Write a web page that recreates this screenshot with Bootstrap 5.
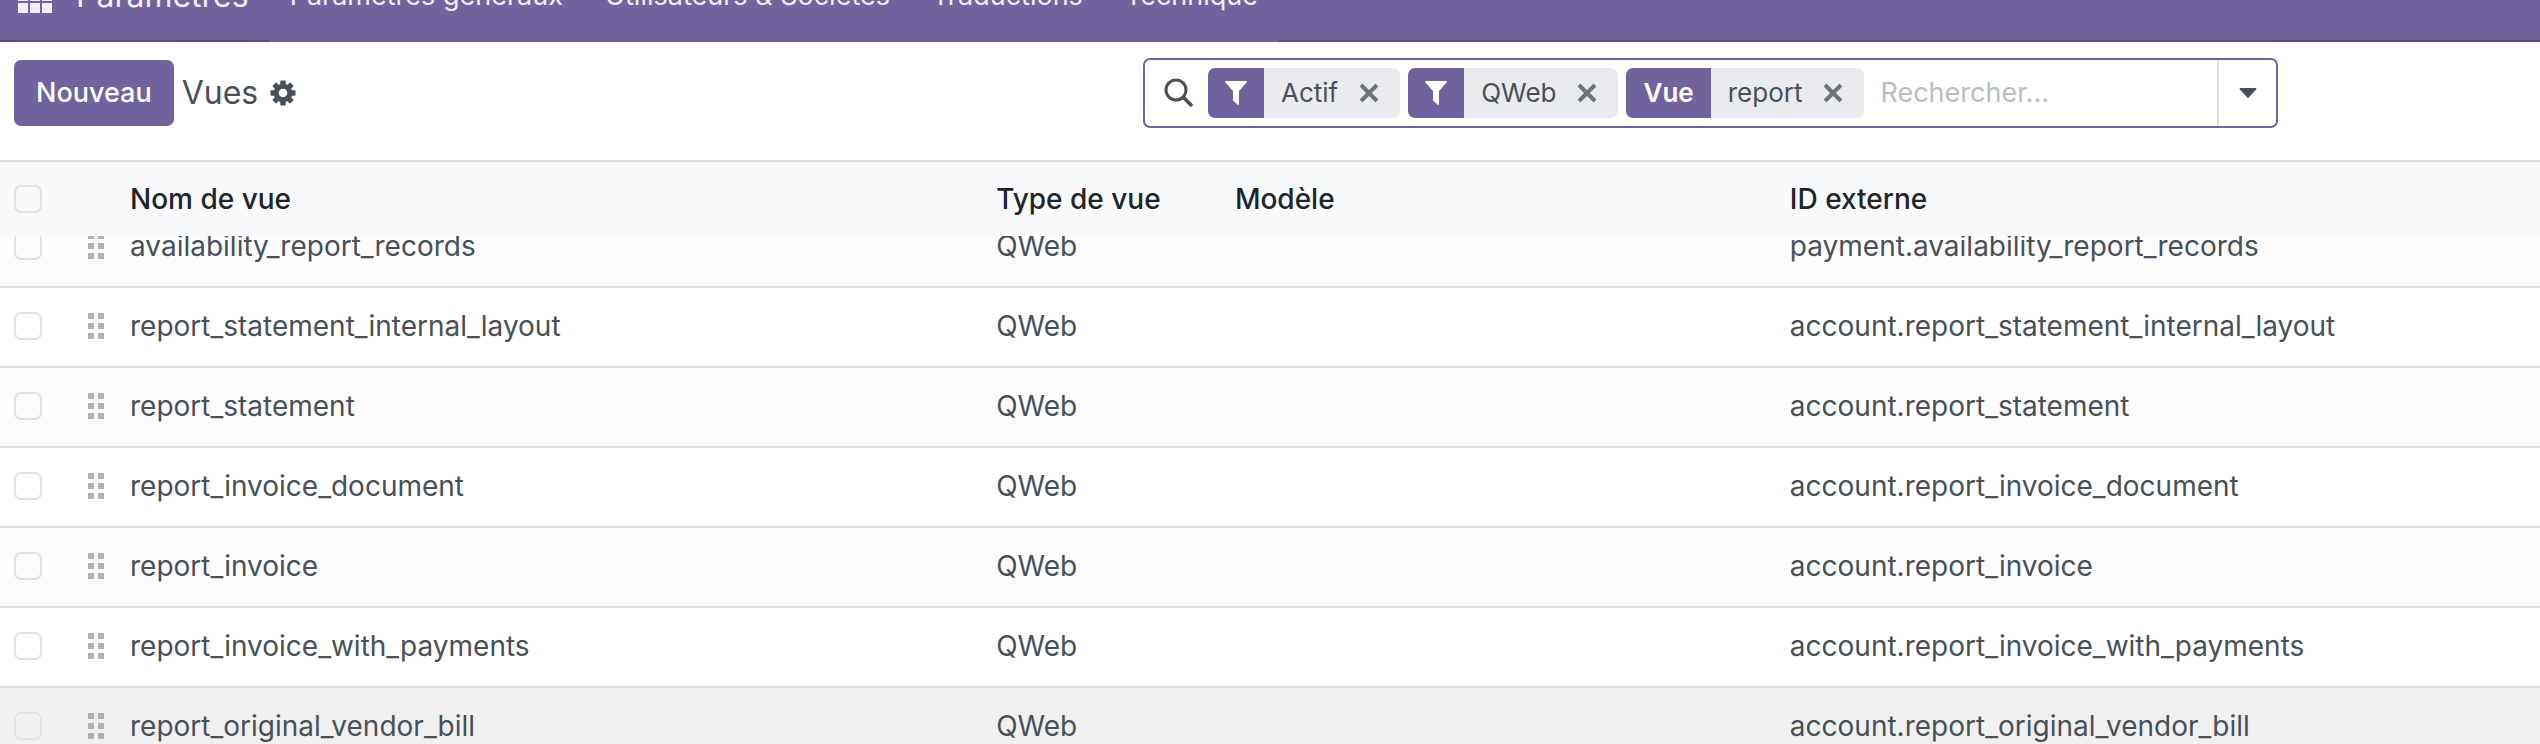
<!DOCTYPE html>
<html lang="fr">
<head>
<meta charset="utf-8">
<meta name="viewport" content="width=device-width, initial-scale=1">
<title>Vues</title>
<link href="https://cdn.jsdelivr.net/npm/bootstrap@5.3.0/dist/css/bootstrap.min.css" rel="stylesheet">
<style>
  :root { --brand: #71639e; --brand-dark: #5a4f7f; --line: #dee0e3; --ink: #495057; }
  body { font-family: Inter, "Liberation Sans", sans-serif; font-size: 27px; line-height: 36px; color: var(--ink); }
  /* top bar, scrolled partly out of view */
  .topbar { height: 42px; background: var(--brand); box-shadow: inset 0 -2px var(--brand-dark); }
  .topbar-inner { height: 92px; }
  .topbar a { color: #f1eef8; text-decoration: none; }
  .apps-link { padding: 0 24px 0 18px; }
  .app-name { font-size: 32px; padding-right: 20px; }
  .menu { background: var(--brand); }
  .menu a { padding: 0 21px; }
  .panel { height: 118px; padding-bottom: 16px; }
  .panel-left { flex: 0 0 45%; padding-left: 14px; gap: 8px; }
  .btn-new { background: var(--brand); color: #fff; font-size: 27px; line-height: 36px; font-weight: 500; padding: 15px 22px; border: 0; border-radius: 7px; }
  .btn-new:hover { background: var(--brand-dark); color: #fff; }
  .crumb { font-size: 32px; line-height: 40px; font-weight: 400; padding-right: 4px; }
  .plain-btn { background: none; border: 0; padding: 0; color: inherit; }
  .search { flex: 0 0 44.7%; min-width: 0; height: 70px; border: 2px solid var(--brand); border-radius: 7px; padding-left: 19px; }
  .search-icon { margin-right: 14px; }
  .facet { height: 50px; background: #e9ebee; border-radius: 7px; margin-right: 8px; overflow: hidden; font-size: 26px; }
  .facet-tag { background: var(--brand); color: #fff; font-weight: 600; padding: 0 17px; }
  .facet-icon { width: 56px; padding: 0; }
  .facet-text { padding-left: 17px; }
  .facet .plain-btn { padding: 0 21px; color: #6c757d; }
  .search input { width: 0; border: 0; outline: 0; background: none; min-width: 0; padding: 0 0 0 8px; color: var(--ink); font-size: 27px; }
  .search input::placeholder { color: #b9bec4; opacity: 1; }
  .search-toggle { width: 59px; border-left: 2px solid var(--line); }
  .list { min-height: 0; }
  .view-table { table-layout: fixed; border-collapse: separate; border-spacing: 0; width: 100%; }
  .view-table th { height: 76px; background: #f8f9fb; border-top: 2px solid var(--line); color: #212529; font-weight: 500; font-size: 28px; position: sticky; top: 0; z-index: 1; padding: 0 9px; }
  .view-table td { height: 80px; border-bottom: 2px solid var(--line); padding: 0 9px 2px; white-space: nowrap; font-size: 28px; }
  .view-table tbody tr:nth-child(odd) { background: #fcfcfd; }
  .view-table tbody tr.hovered { background: #f0f0f1; }
  .view-table .pick { padding-left: 14px; }
  .pick .form-check-input { display: block; float: none; width: 28px; height: 28px; margin: 0; border: 2px solid #e0e2e4; border-radius: 7px; background-color: transparent; }
  .c-pick { width: 60px; } .c-grip { width: 61px; } .c-name { width: 34.1%; } .c-type { width: 9.4%; } .c-model { width: 21.85%; }
  .view-table .grip { padding-left: 28px; }
  svg { display: block; }
</style>
</head>
<body class="vh-100 d-flex flex-column overflow-hidden bg-white">

<svg class="d-none" aria-hidden="true">
  <symbol id="i-funnel" viewBox="0 0 22 24"><path d="M1 0h20c1 0 1 1 .5 1.600L14 10v13c0 1-1 1.200-1.600.600L8.500 20c-.4-.4-.5-.7-.5-1.200V10L.5 1.600C0 1 0 0 1 0z" fill="currentColor"/></symbol>
  <symbol id="i-cross" viewBox="0 0 20 20"><path d="M2 2l16 16M18 2L2 18" stroke="currentColor" stroke-width="4" fill="none"/></symbol>
  <symbol id="i-grip" viewBox="0 0 16 26"><path d="M0 0h6v6H0zM10 0h6v6h-6zM0 10h6v6H0zM10 10h6v6h-6zM0 20h6v6H0zM10 20h6v6h-6z" fill="#adb2b7"/></symbol>
</svg>

<header class="topbar flex-shrink-0 d-flex align-items-end overflow-hidden">
  <nav class="topbar-inner flex-shrink-0 d-flex">
    <a class="apps-link d-flex align-items-center" href="#" aria-label="Applications">
      <svg width="34" height="34" viewBox="0 0 34 34" fill="#f1eef8"><path d="M0 0h10v10H0zM12 0h10v10H12zM24 0h10v10H24zM0 12h10v10H0zM12 12h10v10H12zM24 12h10v10H24zM0 24h10v10H0zM12 24h10v10H12zM24 24h10v10H24z"/></svg>
    </a>
    <a class="app-name d-flex align-items-center" href="#">Paramètres</a>
    <div class="menu d-flex align-items-center">
      <a href="#">Paramètres généraux</a>
      <a href="#">Utilisateurs &amp; Sociétés</a>
      <a href="#">Traductions</a>
      <a href="#">Technique</a>
    </div>
  </nav>
</header>

<section class="panel flex-shrink-0 d-flex align-items-center">
  <div class="panel-left d-flex align-items-center">
    <button type="button" class="btn btn-new">Nouveau</button>
    <h1 class="crumb m-0">Vues</h1>
    <button type="button" class="plain-btn" aria-label="Actions">
      <svg width="26" height="26" viewBox="-13 -13 26 26"><g fill="currentColor"><g id="teeth"><rect x="-2.700" y="-12.500" width="5.400" height="25" rx="1"/><rect x="-12.500" y="-2.700" width="25" height="5.400" rx="1"/></g><use href="#teeth" transform="rotate(45)"/><circle r="9.300"/></g><circle r="4.300" fill="#fff"/></svg>
    </button>
  </div>
  <div class="search d-flex align-items-center" role="search">
    <svg class="search-icon flex-shrink-0" width="30" height="30" viewBox="0 0 30 30" fill="none" stroke="currentColor" stroke-width="3"><circle cx="12" cy="12" r="10"/><path d="M19 19l9 9" stroke-width="3.500"/></svg>
    <div class="facet flex-shrink-0 d-flex align-items-stretch">
      <span class="facet-tag facet-icon d-flex align-items-center justify-content-center"><svg width="22" height="24"><use href="#i-funnel"/></svg></span>
      <span class="facet-text d-flex align-items-center">Actif</span>
      <button type="button" class="plain-btn" aria-label="Retirer Actif"><svg width="20" height="20"><use href="#i-cross"/></svg></button>
    </div>
    <div class="facet flex-shrink-0 d-flex align-items-stretch">
      <span class="facet-tag facet-icon d-flex align-items-center justify-content-center"><svg width="22" height="24"><use href="#i-funnel"/></svg></span>
      <span class="facet-text d-flex align-items-center">QWeb</span>
      <button type="button" class="plain-btn" aria-label="Retirer QWeb"><svg width="20" height="20"><use href="#i-cross"/></svg></button>
    </div>
    <div class="facet flex-shrink-0 d-flex align-items-stretch">
      <span class="facet-tag d-flex align-items-center">Vue</span>
      <span class="facet-text d-flex align-items-center">report</span>
      <button type="button" class="plain-btn" aria-label="Retirer report"><svg width="20" height="20"><use href="#i-cross"/></svg></button>
    </div>
    <input class="flex-grow-1" type="text" placeholder="Rechercher..." aria-label="Rechercher">
    <button type="button" class="plain-btn search-toggle align-self-stretch d-flex align-items-center justify-content-center flex-shrink-0" aria-label="Options de recherche">
      <svg width="18" height="10" viewBox="0 0 18 10"><path d="M1.500 0h15q1.500 0 .7 1.200L10 9.300q-1 1-2 0L.8 1.200Q0 0 1.500 0z" fill="currentColor"/></svg>
    </button>
  </div>
</section>

<main class="list flex-grow-1 overflow-hidden" id="list">
  <table class="view-table">
    <colgroup><col class="c-pick"><col class="c-grip"><col class="c-name"><col class="c-type"><col class="c-model"><col></colgroup>
    <thead>
      <tr><th class="pick"><input class="form-check-input" type="checkbox" aria-label="Tout sélectionner"></th><th></th><th>Nom de vue</th><th>Type de vue</th><th>Modèle</th><th>ID externe</th></tr>
    </thead>
    <tbody>
      <tr><td class="pick"><input class="form-check-input" type="checkbox" aria-label="Sélectionner"></td><td class="grip"><svg width="16" height="26"><use href="#i-grip"/></svg></td><td>availability_report_records</td><td>QWeb</td><td></td><td>payment.availability_report_records</td></tr>
      <tr><td class="pick"><input class="form-check-input" type="checkbox" aria-label="Sélectionner"></td><td class="grip"><svg width="16" height="26"><use href="#i-grip"/></svg></td><td>report_statement_internal_layout</td><td>QWeb</td><td></td><td>account.report_statement_internal_layout</td></tr>
      <tr><td class="pick"><input class="form-check-input" type="checkbox" aria-label="Sélectionner"></td><td class="grip"><svg width="16" height="26"><use href="#i-grip"/></svg></td><td>report_statement</td><td>QWeb</td><td></td><td>account.report_statement</td></tr>
      <tr><td class="pick"><input class="form-check-input" type="checkbox" aria-label="Sélectionner"></td><td class="grip"><svg width="16" height="26"><use href="#i-grip"/></svg></td><td>report_invoice_document</td><td>QWeb</td><td></td><td>account.report_invoice_document</td></tr>
      <tr><td class="pick"><input class="form-check-input" type="checkbox" aria-label="Sélectionner"></td><td class="grip"><svg width="16" height="26"><use href="#i-grip"/></svg></td><td>report_invoice</td><td>QWeb</td><td></td><td>account.report_invoice</td></tr>
      <tr><td class="pick"><input class="form-check-input" type="checkbox" aria-label="Sélectionner"></td><td class="grip"><svg width="16" height="26"><use href="#i-grip"/></svg></td><td>report_invoice_with_payments</td><td>QWeb</td><td></td><td>account.report_invoice_with_payments</td></tr>
      <tr class="hovered"><td class="pick"><input class="form-check-input" type="checkbox" aria-label="Sélectionner"></td><td class="grip"><svg width="16" height="26"><use href="#i-grip"/></svg></td><td>report_original_vendor_bill</td><td>QWeb</td><td></td><td>account.report_original_vendor_bill</td></tr>
    </tbody>
  </table>
</main>

<script src="https://cdn.jsdelivr.net/npm/bootstrap@5.3.0/dist/js/bootstrap.bundle.min.js"></script>
<script>
  // the list opens slightly scrolled, its header stays in place
  document.getElementById('list').scrollTop = 28;
</script>
</body>
</html>
